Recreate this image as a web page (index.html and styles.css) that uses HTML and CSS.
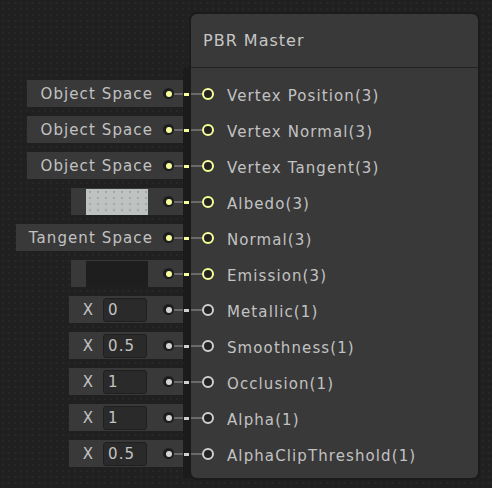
FILE: index.html
```html
<!DOCTYPE html>
<html>
<head>
<meta charset="utf-8">
<link rel="stylesheet" href="styles.css">
</head>
<body>
<div class="graph">
  <div class="inputs">
    <div class="in-row"><div class="field"><span class="field-text">Object Space</span><span class="dot vec"></span><span class="wire"></span></div></div>
    <div class="in-row"><div class="field"><span class="field-text">Object Space</span><span class="dot vec"></span><span class="wire"></span></div></div>
    <div class="in-row"><div class="field"><span class="field-text">Object Space</span><span class="dot vec"></span><span class="wire"></span></div></div>
    <div class="in-row"><div class="field"><span class="swatch light"></span><span class="dot vec"></span><span class="wire"></span></div></div>
    <div class="in-row"><div class="field"><span class="field-text">Tangent Space</span><span class="dot vec"></span><span class="wire"></span></div></div>
    <div class="in-row"><div class="field"><span class="swatch dark"></span><span class="dot vec"></span><span class="wire"></span></div></div>
    <div class="in-row"><div class="field"><span class="x">X</span><span class="num">0</span><span class="dot flt"></span><span class="wire"></span></div></div>
    <div class="in-row"><div class="field"><span class="x">X</span><span class="num">0.5</span><span class="dot flt"></span><span class="wire"></span></div></div>
    <div class="in-row"><div class="field"><span class="x">X</span><span class="num">1</span><span class="dot flt"></span><span class="wire"></span></div></div>
    <div class="in-row"><div class="field"><span class="x">X</span><span class="num">1</span><span class="dot flt"></span><span class="wire"></span></div></div>
    <div class="in-row"><div class="field"><span class="x">X</span><span class="num">0.5</span><span class="dot flt"></span><span class="wire"></span></div></div>
  </div>
  <div class="strip">
    <div class="s-row"><span class="dash vec"></span></div>
    <div class="s-row"><span class="dash vec"></span></div>
    <div class="s-row"><span class="dash vec"></span></div>
    <div class="s-row"><span class="dash vec"></span></div>
    <div class="s-row"><span class="dash vec"></span></div>
    <div class="s-row"><span class="dash vec"></span></div>
    <div class="s-row"><span class="dash flt"></span></div>
    <div class="s-row"><span class="dash flt"></span></div>
    <div class="s-row"><span class="dash flt"></span></div>
    <div class="s-row"><span class="dash flt"></span></div>
    <div class="s-row"><span class="dash flt"></span></div>
  </div>
  <div class="node">
    <div class="node-header">PBR Master</div>
    <div class="node-body">
      <div class="port-row"><span class="pwire"></span><span class="port vec"></span><span class="label">Vertex Position(3)</span></div>
      <div class="port-row"><span class="pwire"></span><span class="port vec"></span><span class="label">Vertex Normal(3)</span></div>
      <div class="port-row"><span class="pwire"></span><span class="port vec"></span><span class="label">Vertex Tangent(3)</span></div>
      <div class="port-row"><span class="pwire"></span><span class="port vec"></span><span class="label">Albedo(3)</span></div>
      <div class="port-row"><span class="pwire"></span><span class="port vec"></span><span class="label">Normal(3)</span></div>
      <div class="port-row"><span class="pwire"></span><span class="port vec"></span><span class="label">Emission(3)</span></div>
      <div class="port-row"><span class="pwire"></span><span class="port flt"></span><span class="label">Metallic(1)</span></div>
      <div class="port-row"><span class="pwire"></span><span class="port flt"></span><span class="label">Smoothness(1)</span></div>
      <div class="port-row"><span class="pwire"></span><span class="port flt"></span><span class="label">Occlusion(1)</span></div>
      <div class="port-row"><span class="pwire"></span><span class="port flt"></span><span class="label">Alpha(1)</span></div>
      <div class="port-row"><span class="pwire"></span><span class="port flt"></span><span class="label">AlphaClipThreshold(1)</span></div>
    </div>
  </div>
</div>
</body>
</html>
```
FILE: styles.css
```css
html, body {
  margin: 0;
  padding: 0;
}
body {
  width: 492px;
  height: 488px;
  overflow: hidden;
  background-color: #202020;
  background-image: radial-gradient(circle, #272727 0.7px, transparent 1.2px);
  background-size: 6px 6px;
  font-family: "DejaVu Sans", "Noto Sans", sans-serif;
  color: #c2c2c2;
}
.graph {
  display: flex;
  padding-top: 14px;
}
.inputs {
  width: 183px;
  padding-top: 62px;
  display: flex;
  flex-direction: column;
}
.in-row {
  height: 36px;
  display: flex;
  justify-content: flex-end;
  align-items: flex-start;
}
.field {
  margin-top: 4px;
  height: 27px;
  background: #393939;
  display: flex;
  align-items: center;
}
.field-text {
  padding-left: 13px;
  margin-right: 10px;
  font-size: 15px;
  letter-spacing: 1.1px;
  white-space: nowrap;
}
.dot {
  width: 11px;
  height: 11px;
  border-radius: 50%;
  background: #1d1d1d;
  display: flex;
  align-items: center;
  justify-content: center;
  flex: none;
}
.dot::after {
  content: "";
  width: 6px;
  height: 6px;
  border-radius: 50%;
}
.dot.vec::after { background: #f6ff9a; }
.dot.flt::after { background: #d4d4d4; }
.wire {
  width: 9px;
  height: 2px;
  background: #6a6a6a;
  flex: none;
}
.swatch {
  width: 62px;
  height: 26px;
  margin-left: 15px;
  margin-right: 15px;
  align-self: flex-end;
}
.swatch.light {
  background-color: #bec2c0;
  background-image: radial-gradient(circle, #a3a8a6 0.7px, transparent 1.1px);
  background-size: 8px 6px;
}
.swatch.dark {
  background: #1e1e1e;
}
.x {
  padding-left: 14px;
  margin-right: 10px;
  font-size: 15px;
}
.num {
  box-sizing: border-box;
  width: 44px;
  height: 24px;
  margin-right: 16px;
  padding-left: 4px;
  background: #2a2a2a;
  border: 1px solid #1f1f1f;
  border-radius: 3px;
  font-size: 15px;
  letter-spacing: 1.1px;
  display: flex;
  align-items: center;
}
.strip {
  width: 8px;
  margin-top: 54px;
  height: 410px;
  box-sizing: border-box;
  padding-top: 8px;
  background: #1b1b1b;
}
.s-row {
  height: 36px;
  display: flex;
  align-items: center;
  justify-content: center;
}
.dash {
  width: 6px;
  height: 3px;
}
.dash.vec { background: #f6ff9a; }
.dash.flt { background: #cfcfcf; }
.node {
  width: 287px;
  background: #393939;
  border-radius: 6px;
  box-shadow: 0 0 0 2px #1b1b1b;
}
.node-header {
  height: 53px;
  border-bottom: 1px solid #212121;
  display: flex;
  align-items: center;
  padding-left: 12px;
  padding-bottom: 0;
  font-size: 16px;
  letter-spacing: 1px;
  color: #c6c6c6;
}
.node-body {
  padding: 8px 0 3px;
}
.port-row {
  height: 36px;
  display: flex;
  align-items: center;
}
.pwire {
  width: 11px;
  height: 2px;
  background: #6a6a6a;
  flex: none;
}
.port {
  box-sizing: border-box;
  width: 12px;
  height: 12px;
  border-radius: 50%;
  background: #232323;
  border: 2px solid;
  flex: none;
}
.port.vec { border-color: #f6ff9a; }
.port.flt { border-color: #cfcfcf; }
.label {
  margin-left: 13px;
  padding-top: 3px;
  font-size: 15px;
  letter-spacing: 1.1px;
  white-space: nowrap;
}
```
